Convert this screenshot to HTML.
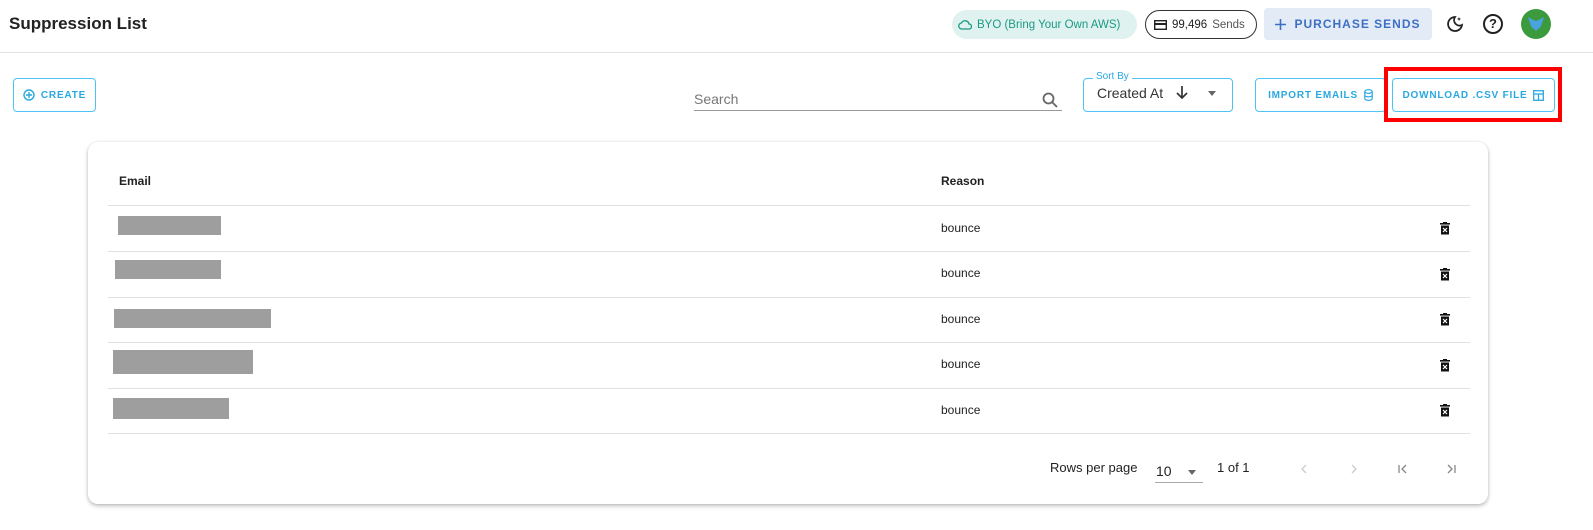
<!DOCTYPE html>
<html><head><style>
*{box-sizing:border-box;margin:0;padding:0}
body{width:1593px;height:530px;background:#fff;font-family:"Liberation Sans",sans-serif;position:relative;overflow:hidden;color:#222}
.a{position:absolute}
.btn{position:absolute;border:1px solid #4fc3f7;border-radius:4px;color:#29a8e0;font-size:10px;font-weight:bold;letter-spacing:0.8px;display:flex;align-items:center;justify-content:center;gap:6px;white-space:nowrap}
.row{position:absolute;left:108px;width:1362px;height:46px;border-bottom:1px solid #e0e0e0;font-size:12px}
.gray{position:absolute;background:#9e9e9e;height:19px}
.trash{position:absolute;left:1332px;top:16px}
</style></head><body>
<div class="a" style="left:9px;top:14px;font-size:17px;font-weight:bold;color:#222">Suppression List</div>
<div class="a" style="left:0;top:52px;width:1593px;height:1px;background:#e3e3e3"></div>
<div class="a" style="left:952px;top:10px;width:185px;height:29px;border-radius:15px;background:#e0f2ef;color:#1a9a84;font-size:11.5px;display:flex;align-items:center;padding-left:6px;gap:5px;white-space:nowrap"><svg width="14" height="12" viewBox="0 0 14 12"><path d="M4 10h7a2.5 2.5 0 0 0 0-5 4 4 0 0 0-7.5-1A3 3 0 0 0 4 10z" fill="none" stroke="#1a9a84" stroke-width="1.3"/></svg>BYO (Bring Your Own AWS)</div>
<div class="a" style="left:1145px;top:10px;width:112px;height:29px;border-radius:15px;border:1px solid #333;font-size:11.5px;display:flex;align-items:center;padding-left:8px;gap:5px;white-space:nowrap"><svg width="13" height="10"><rect x="0.7" y="0.7" width="11.6" height="8.6" fill="none" stroke="#222" stroke-width="1.4"/><rect x="1" y="3" width="11" height="2" fill="#222"/></svg>99,496 <span style="color:#555">Sends</span></div>
<div class="a" style="left:1264px;top:8px;width:168px;height:32px;border-radius:4px;background:#e3ebf7;color:#3d6fc4;font-size:12px;font-weight:bold;letter-spacing:1px;display:flex;align-items:center;justify-content:center;gap:8px;white-space:nowrap"><svg width="11" height="11"><path d="M5.5 0v11M0 5.5h11" stroke="#3d6fc4" stroke-width="1.6"/></svg>PURCHASE SENDS</div>
<svg class="a" style="left:1446px;top:15px" width="18" height="18" viewBox="0 0 18 18"><path d="M9 2a7 7 0 1 0 7 8A5.5 5.5 0 0 1 9 2z" fill="none" stroke="#222" stroke-width="1.8"/><path d="M13 2l.6 1.4L15 4l-1.4.6L13 6l-.6-1.4L11 4l1.4-.6z" fill="#222"/></svg>
<div class="a" style="left:1483px;top:14px;width:20px;height:20px;border:2px solid #222;border-radius:50%;font-size:13px;font-weight:bold;text-align:center;line-height:16px">?</div>
<div class="a" style="left:1521px;top:9px;width:30px;height:30px;border-radius:50%;background:#3b9a3b"><div style="margin:8px 7px;width:16px;height:14px;background:#4aa3e0;clip-path:polygon(0 0,50% 30%,100% 0,80% 70%,50% 100%,20% 70%)"></div></div>

<div class="btn" style="left:13px;top:78px;width:83px;height:34px"><svg width="12" height="12"><circle cx="6" cy="6" r="5" fill="none" stroke="#29a8e0" stroke-width="1.4"/><path d="M6 3v6M3 6h6" stroke="#29a8e0" stroke-width="1.4"/></svg>CREATE</div>
<div class="a" style="left:694px;top:91px;font-size:14px;color:#777">Search</div>
<div class="a" style="left:694px;top:110px;width:368px;height:1px;background:#999"></div>
<svg class="a" style="left:1042px;top:92px" width="16" height="16"><circle cx="6.5" cy="6.5" r="5" fill="none" stroke="#666" stroke-width="1.8"/><path d="M10 10l5 5" stroke="#666" stroke-width="1.8"/></svg>
<div class="a" style="left:1083px;top:78px;width:150px;height:34px;border:1px solid #4fc3f7;border-radius:4px"></div>
<div class="a" style="left:1093px;top:71px;background:#fff;padding:0 3px;font-size:10px;color:#29a8e0">Sort By</div>
<div class="a" style="left:1097px;top:85px;font-size:14px;color:#333">Created At</div>
<svg class="a" style="left:1176px;top:85px" width="12" height="14"><path d="M6 1v12M1 8l5 5 5-5" fill="none" stroke="#333" stroke-width="1.7"/></svg>
<div class="a" style="left:1208px;top:91px;border:4px solid transparent;border-top:5px solid #666"></div>
<div class="btn" style="left:1255px;top:78px;width:131px;height:34px">IMPORT EMAILS <svg width="9" height="12"><ellipse cx="4.5" cy="2.5" rx="3.7" ry="1.8" fill="none" stroke="#29a8e0" stroke-width="1.2"/><path d="M0.8 2.5v7c0 2.4 7.4 2.4 7.4 0v-7M0.8 6c0 2.4 7.4 2.4 7.4 0" fill="none" stroke="#29a8e0" stroke-width="1.2"/></svg></div>
<div class="btn" style="left:1392px;top:78px;width:163px;height:34px">DOWNLOAD .CSV FILE <svg width="11" height="11"><rect x="0.7" y="0.7" width="9.6" height="9.6" fill="none" stroke="#29a8e0" stroke-width="1.3"/><path d="M0.7 4h9.6M5.5 4v6.3" stroke="#29a8e0" stroke-width="1.3"/></svg></div>
<div class="a" style="left:1384px;top:67px;width:178px;height:55px;border:4px solid #f00"></div>

<div class="a" style="left:88px;top:142px;width:1400px;height:362px;border-radius:10px;box-shadow:0 2px 4px rgba(0,0,0,.25),0 0 2px rgba(0,0,0,.1);background:#fff">
<div class="a" style="left:31px;top:32px;font-size:12px;font-weight:bold">Email</div>
<div class="a" style="left:853px;top:32px;font-size:12px;font-weight:bold">Reason</div>
</div>
<div class="a" style="left:108px;top:205px;width:1362px;height:1px;background:#e0e0e0"></div>
<svg width="0" height="0" style="position:absolute"><defs><symbol id="t" viewBox="0 0 10 13"><rect x="0" y="1" width="10" height="1.6" fill="#111"/><rect x="3" y="0" width="4" height="1.5" fill="#111"/><path d="M1 3.5h8v9H1z" fill="#111"/><path d="M3 6l4 4M7 6l-4 4" stroke="#fff" stroke-width="1.2"/></symbol></defs></svg>
<div class="row" style="top:206px"><div class="gray" style="left:10px;top:10px;width:103px"></div><div class="a" style="left:833px;top:15px">bounce</div><svg class="trash" width="10" height="13"><use href="#t"/></svg></div>
<div class="row" style="top:252px"><div class="gray" style="left:7px;top:8px;width:106px"></div><div class="a" style="left:833px;top:14px">bounce</div><svg class="trash" width="10" height="13"><use href="#t"/></svg></div>
<div class="row" style="top:297px"><div class="gray" style="left:6px;top:12px;width:157px"></div><div class="a" style="left:833px;top:15px">bounce</div><svg class="trash" width="10" height="13"><use href="#t"/></svg></div>
<div class="row" style="top:343px"><div class="gray" style="left:5px;top:7px;width:140px;height:24px"></div><div class="a" style="left:833px;top:14px">bounce</div><svg class="trash" width="10" height="13"><use href="#t"/></svg></div>
<div class="row" style="top:388px"><div class="gray" style="left:5px;top:10px;width:116px;height:21px"></div><div class="a" style="left:833px;top:15px">bounce</div><svg class="trash" width="10" height="13"><use href="#t"/></svg></div>
<div class="a" style="left:1050px;top:460px;font-size:13px">Rows per page</div>
<div class="a" style="left:1156px;top:463px;font-size:14px">10</div>
<div class="a" style="left:1188px;top:470px;border:4px solid transparent;border-top:5px solid #666"></div>
<div class="a" style="left:1155px;top:482px;width:48px;height:1px;background:#aaa"></div>
<div class="a" style="left:1217px;top:460px;font-size:13px">1 of 1</div>
<svg class="a" style="left:1301px;top:464px" width="6" height="10"><path d="M5 1L1 5l4 4" fill="none" stroke="#ccc" stroke-width="1.3"/></svg>
<svg class="a" style="left:1351px;top:464px" width="6" height="10"><path d="M1 1l4 4-4 4" fill="none" stroke="#ccc" stroke-width="1.3"/></svg>
<svg class="a" style="left:1398px;top:464px" width="10" height="10"><path d="M1 1v8M8 1L4 5l4 4" fill="none" stroke="#888" stroke-width="1.3"/></svg>
<svg class="a" style="left:1446px;top:464px" width="10" height="10"><path d="M9 1v8M2 1l4 4-4 4" fill="none" stroke="#888" stroke-width="1.3"/></svg>
</body></html>
